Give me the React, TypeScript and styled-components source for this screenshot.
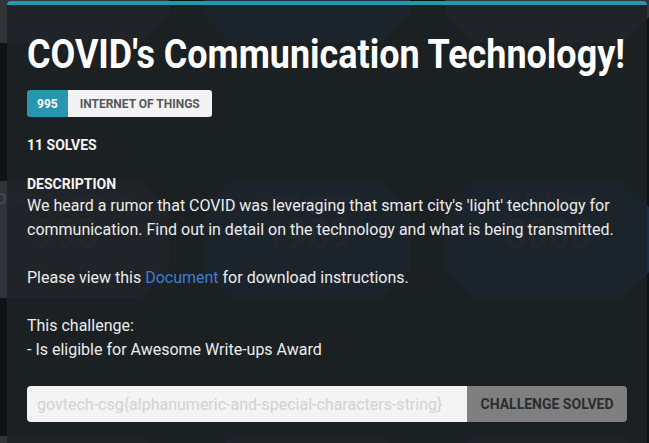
import styled, { createGlobalStyle } from "styled-components";

const GlobalStyle = createGlobalStyle`
  html, body {
    margin: 0;
    padding: 0;
    background: #0f1215;
    overflow: hidden;
  }
  * { box-sizing: border-box; }
`;

const heading = `Roboto, "Liberation Sans", sans-serif`;

// ---- page behind the modal ----
const Page = styled.div`
  width: 649px;
  height: 443px;
  position: relative;
  overflow: hidden;
`;

const Board = styled.div`
  display: grid;
  grid-template-columns: repeat(3, 206px);
  column-gap: 35px;
  row-gap: 138px;
  margin-left: -37px;
  margin-top: -74px;
`;

const Card = styled.div<{ $blue?: boolean }>`
  height: 117px;
  background: ${(p) => (p.$blue ? "#162f4c" : "#303438")};
  clip-path: polygon(28px 0, calc(100% - 28px) 0, 100% 28px, 100% calc(100% - 28px), calc(100% - 28px) 100%, 28px 100%, 0 calc(100% - 28px), 0 28px);
  display: flex;
  flex-direction: column;
  align-items: center;
  padding-top: 9px;
  color: #464b50;
  font-family: ${heading};
`;

const CardName = styled.div`
  font-size: 15px;
  font-weight: 500;
  line-height: 18px;
`;

const CardPoints = styled.div`
  font-size: 42px;
  font-weight: 700;
  line-height: 44px;
  margin-top: 4px;
  transform: scaleX(0.9);
`;

// ---- modal ----
const Overlay = styled.div`
  position: absolute;
  inset: 0;
  padding: 1px 2px 0 7px;
`;

const Modal = styled.div`
  background: rgba(30, 34, 38, 0.87);
  border-top: 4px solid #2597b0;
  border-radius: 4px 4px 0 0;
  height: 100%;
  padding: 26px 20px 0 20px;
  display: flex;
  flex-direction: column;
`;

const Title = styled.h1`
  margin: 0;
  color: #ffffff;
  font-family: ${heading};
  font-weight: 700;
  font-size: 40px;
  line-height: 48px;
  white-space: nowrap;
  transform: scaleX(0.898);
  transform-origin: left center;
`;

const Tag = styled.div`
  display: inline-flex;
  align-self: flex-start;
  height: 27px;
  margin-top: 11px;
  border-radius: 3px;
  overflow: hidden;
  font-family: ${heading};
  font-weight: 700;
  font-size: 12px;
`;

const TagPart = styled.span<{ $accent?: boolean }>`
  display: flex;
  align-items: center;
  padding: 0 ${(p) => (p.$accent ? "10px" : "12px")};
  background: ${(p) => (p.$accent ? "#2597b0" : "#f3f3f3")};
  color: ${(p) => (p.$accent ? "#ffffff" : "#555759")};
`;

const Label = styled.div<{ $gap: number }>`
  margin-top: ${(p) => p.$gap}px;
  color: #f4f4f4;
  font-family: ${heading};
  font-weight: 700;
  font-size: 14px;
  line-height: 18px;
`;

const Body = styled.div`
  margin-top: 1px;
  color: #ececec;
  font-family: Roboto, "Liberation Sans", sans-serif;
  font-size: 16px;
  line-height: 24px;
`;

const Para = styled.p`
  margin: 0 0 24px 0;
`;

const DocLink = styled.a`
  color: #3d7fd6;
  text-decoration: none;
`;

const FlagRow = styled.div`
  display: flex;
  height: 36px;
  border-radius: 4px;
  overflow: hidden;
`;

const FlagInput = styled.input`
  flex: 1;
  min-width: 0;
  border: none;
  outline: none;
  background: #f4f4f4;
  padding: 0 10px;
  font-family: Roboto, "Liberation Sans", sans-serif;
  font-size: 16px;
  color: #333;
  &::placeholder {
    color: #d2d2d2;
  }
`;

const SolvedButton = styled.button`
  width: 160px;
  border: none;
  background: #7f7f7f;
  color: #2b2d30;
  font-family: ${heading};
  font-weight: 700;
  font-size: 14px;
  white-space: nowrap;
  padding: 0;
`;

const cards = [
  { name: "", points: "", blue: false },
  { name: "", points: "", blue: true },
  { name: "", points: "", blue: false },
  { name: "COVID's Communicati...", points: "995", blue: false },
  { name: "TSmell updates!", points: "1989", blue: true },
  { name: "IOT RSA Token", points: "3000", blue: true },
  { name: "", points: "", blue: false },
  { name: "", points: "", blue: false },
  { name: "", points: "", blue: false },
];

export default function App() {
  return (
    <>
      <GlobalStyle />
      <Page>
        <Board>
          {cards.map((c, i) => (
            <Card key={i} $blue={c.blue}>
              <CardName>{c.name}</CardName>
              <CardPoints>{c.points}</CardPoints>
            </Card>
          ))}
        </Board>
        <Overlay>
          <Modal>
            <Title>COVID's Communication Technology!</Title>
            <Tag>
              <TagPart $accent>995</TagPart>
              <TagPart>INTERNET OF THINGS</TagPart>
            </Tag>
            <Label $gap={19}>11 SOLVES</Label>
            <Label $gap={21}>DESCRIPTION</Label>
            <Body>
              <Para>
                We heard a rumor that COVID was leveraging that smart city's 'light' technology for
                communication. Find out in detail on the technology and what is being transmitted.
              </Para>
              <Para>
                Please view this <DocLink href="#">Document</DocLink> for download instructions.
              </Para>
              <Para>
                This challenge:
                <br />- Is eligible for Awesome Write-ups Award
              </Para>
            </Body>
            <FlagRow>
              <FlagInput placeholder="govtech-csg{alphanumeric-and-special-characters-string}" />
              <SolvedButton>CHALLENGE SOLVED</SolvedButton>
            </FlagRow>
          </Modal>
        </Overlay>
      </Page>
    </>
  );
}
